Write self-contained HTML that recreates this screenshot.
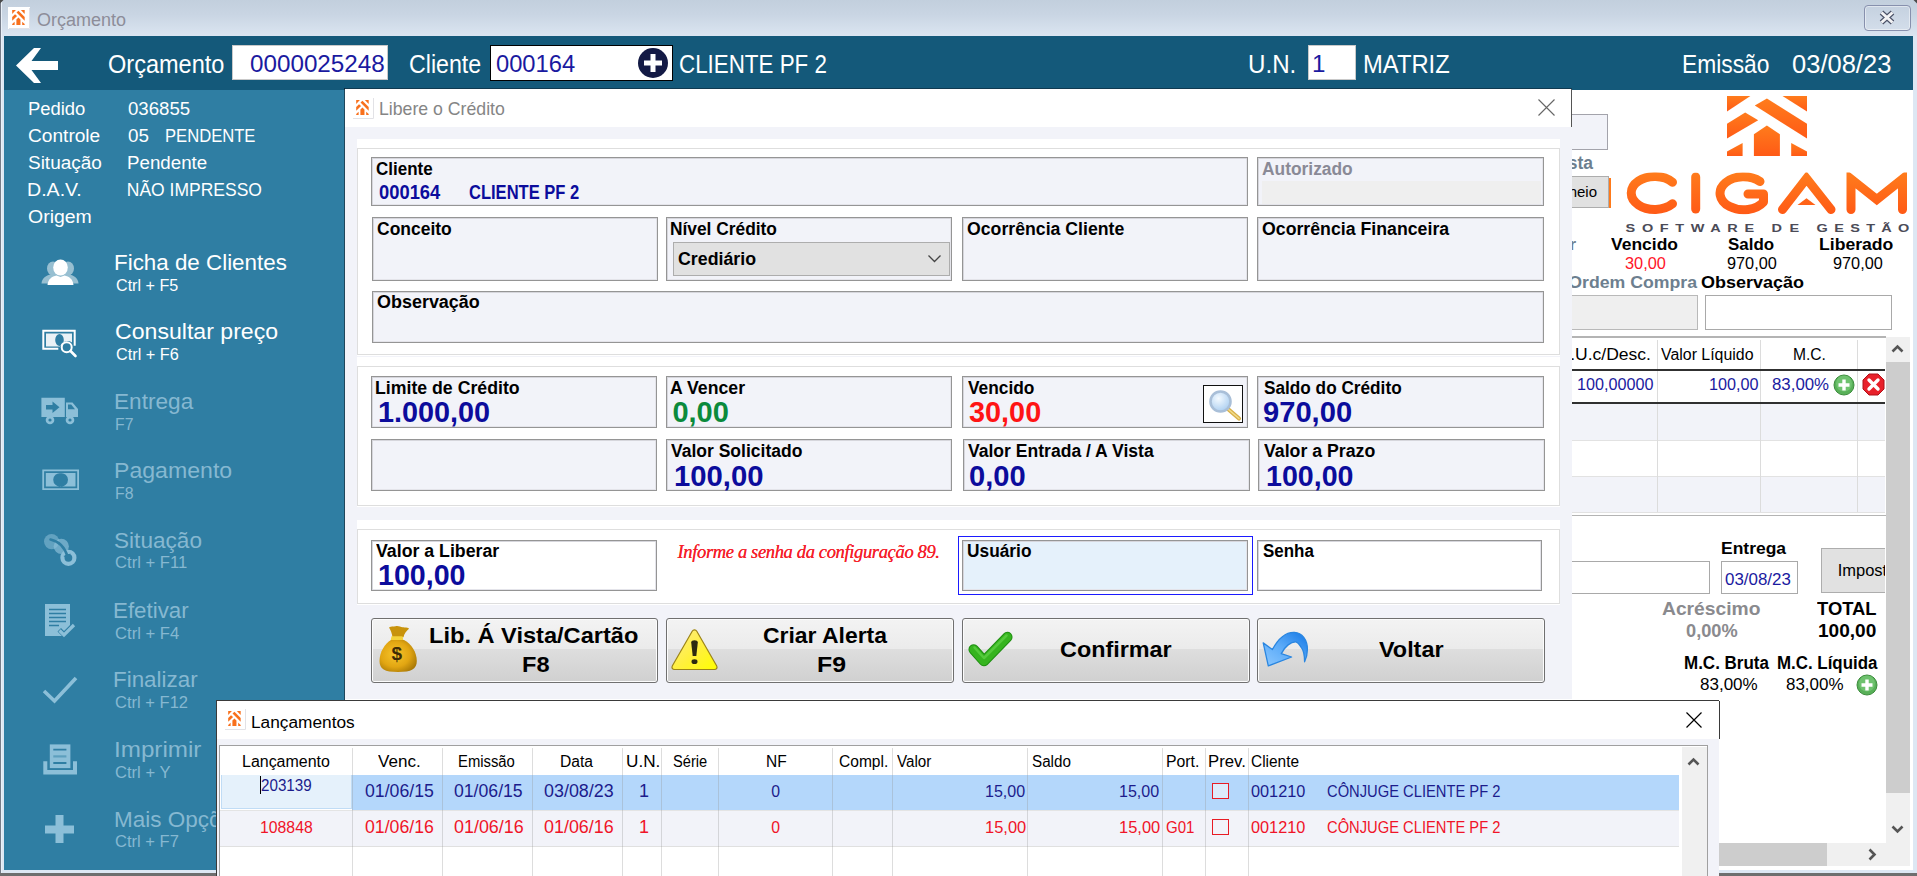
<!DOCTYPE html>
<html><head><meta charset="utf-8">
<style>
*{box-sizing:border-box;margin:0;padding:0}
html,body{width:1917px;height:876px;overflow:hidden;background:#fff;font-family:"Liberation Sans",sans-serif;}
.a{position:absolute;white-space:nowrap}
#win{position:absolute;left:0;top:0;width:1917px;height:876px;background:#dde7f3;overflow:hidden}
#tb{left:0;top:0;width:1917px;height:36px;background:linear-gradient(#c2cfdd 0%,#c9d5e3 40%,#dbe5f1 100%)}
#hdr{left:4px;top:36px;width:1909px;height:54px;background:#14597a}
#side{left:4px;top:90px;width:341px;height:780px;background:#2f7ea3}
#main{left:345px;top:90px;width:1568px;height:780px;background:#fff}
.ht{color:#fff;font-size:25px;line-height:30px;top:49px}
.hin{background:#fff}
.hv{color:#1a1aa0;font-size:24.200px;line-height:30px;top:49px}
.inf{color:#fff;font-size:17.5px;line-height:22px}
.mi{left:115px;color:#fff}
.mi b{display:block;font-weight:normal;font-size:22px;line-height:26px}
.mi i{display:block;font-style:normal;font-size:13.5px;line-height:16px}
.mt{color:#fff;font-size:22.500px;line-height:26px}
.ms{color:#fff;font-size:15.800px;line-height:18px}
.mt.dis,.ms.dis{color:#86b8d1}

#dlg{left:345px;top:89px;width:1227px;height:611px;background:#f2f3f9;border-bottom:1px solid #fff}
#dlgt{left:0;top:0;width:1227px;height:38px;background:#fff;border-right:1px solid #555}
.gb{background:#fff;left:12px;width:1203px}
.gb:after{content:"";position:absolute;left:0;right:0;top:9px;bottom:1px;border:1px solid #dedede}
.f{position:absolute;background:#f2f3f9;border:1px solid #959595;box-shadow:inset 1px 1px 0 #d6d6dc, inset -1px -1px 0 #e4e4ea}
.f.w{background:#fff}
.f.u{background:#e5f1fb}
.l{position:absolute;font-weight:bold;font-size:17.550px;line-height:20px;color:#000;white-space:nowrap}
.v{position:absolute;font-weight:bold;font-size:29px;line-height:30px;color:#0c0c9c;white-space:nowrap}
.btn{position:absolute;top:618px;height:65px;border:1px solid #707070;border-radius:3px;background:linear-gradient(#f3f3f3 0%,#ebebeb 47%,#dedede 48%,#d0d0d0 100%);box-shadow:inset 0 0 0 1px #fcfcfc;font-weight:bold;font-size:23px;line-height:29px;text-align:center;color:#000}

.rb{font-weight:bold;font-size:17px;line-height:20px;color:#000}
.rv{font-size:16px;line-height:18px;color:#000}
.th{font-size:16px;line-height:20px;color:#000}
.td{font-size:16px;line-height:20px;color:#1a1aa0}

#lw{left:216px;top:700px;width:1503px;height:176px;background:#f2f3f9;border:1px solid #3a3a3a;border-bottom:0;border-right:0}
.gh{position:absolute;top:751.500px;font-size:16px;line-height:20px;color:#000;white-space:nowrap}
.gc{position:absolute;font-size:18px;line-height:20px;white-space:nowrap}
.gs{position:absolute;font-size:15.800px;line-height:20px;white-space:nowrap}
.r1{color:#1c1c8c}.r2{color:#f01428}
.vl{position:absolute;top:748px;width:1px;height:128px;background:rgba(150,150,150,.32)}
.cv{font-weight:bold;font-size:18.800px;line-height:20px;color:#0c0c9c}
.bt{font-weight:bold;font-size:22.500px;line-height:26px;color:#000}
</style></head><body>
<div id="win">
<div id="tb" class="a"></div>
<div id="hdr" class="a"></div>
<div id="side" class="a"></div>
<div id="main" class="a"></div>
<svg class="a" style="left:8px;top:7px" width="22" height="22" viewBox="0 0 22 22"><rect width="22" height="22" fill="#fff"/><path d="M21.500 1v20.500H1" fill="none" stroke="#e2e2e6"/><g fill="#f8701c" transform="translate(4.200 3) scale(.156 .25)"><path d="M0 0h23.400L0 15.600z"/><path d="M80 0H55.500L80 15.600z"/><path d="M39.900 2.600L80 27.800v14.700L27.800 9.500z"/><path d="M18.200 16.500l13 7.800L0 42.500V27.800z"/><path d="M39.900 29.500l13 8.700V60h-26V38.200z"/><path d="M0 55.500l15.600-8.600V60H0z"/><path d="M80 55.500l-15.800-8.600V60H80z"/></g></svg>
<div class="a" style="left:37px;top:9px;font-size:18px;line-height:22px;color:#8d8d99">Orçamento</div>
<div class="a" style="left:1864px;top:5px;width:47px;height:26px;border:1px solid #8790ad;border-radius:4px;background:linear-gradient(#c5d1e0,#d3ddea);box-shadow:inset 0 0 0 1px rgba(255,255,255,.45)"></div>
<svg class="a" style="left:1877px;top:9px" width="20" height="17" viewBox="0 0 20 17"><path d="M4.500 3.500l11 10M15.500 3.500l-11 10" stroke="#4a5066" stroke-width="5.200" stroke-linecap="butt"/><path d="M4.500 3.500l11 10M15.500 3.500l-11 10" stroke="#f2f2f4" stroke-width="3" stroke-linecap="butt"/></svg>
<div class="a" style="left:0;top:0;width:1px;height:876px;background:#767c88"></div><div class="a" style="left:1px;top:2px;width:1px;height:871px;background:#e9f0f8"></div><svg class="a" style="left:0;top:0" width="4" height="4"><path d="M0 0h3.500L0 3.500z" fill="#4a4a4a"/></svg><svg class="a" style="left:1913px;top:0" width="4" height="4"><path d="M4 0H.5L4 3.500z" fill="#4a4a4a"/></svg>
<div class="a" style="left:0;top:873px;width:1917px;height:3px;background:#6e6e6e"></div>


<svg class="a" style="left:15px;top:47px" width="44" height="37" viewBox="0 0 44 37"><path d="M1 18.500L19 1h7l-9.500 13H43v9H16.500L26 36h-7z" fill="#fff"/></svg>
<div class="a ht" id="h1" style="left:108.42px;transform-origin:0 0;transform:scaleX(0.9411)">Orçamento</div>
<div class="a hin" style="left:232px;top:45px;width:156px;height:35px;border:1px solid #c9c9c9"></div>
<div class="a hv" id="h2" style="left:249.8px;transform-origin:0 0;transform:scaleX(1.0015)">0000025248</div>
<div class="a ht" id="h3" style="left:408.59px;transform-origin:0 0;transform:scaleX(0.9266)">Cliente</div>
<div class="a hin" style="left:490px;top:45px;width:183px;height:36px;border:1.500px solid #000"></div>
<div class="a hv" id="h4" style="left:496.22px;transform-origin:0 0;transform:scaleX(0.98)">000164</div>
<svg class="a" style="left:637px;top:47px" width="32" height="32" viewBox="0 0 32 32"><circle cx="16" cy="16" r="15" fill="#131a45"/><path d="M13.500 7h5v6.500H25v5h-6.500V25h-5v-6.500H7v-5h6.500z" fill="#fff"/></svg>
<div class="a ht" id="h5" style="left:678.6px;transform-origin:0 0;transform:scaleX(0.8945)">CLIENTE PF 2</div>
<div class="a ht" id="h6" style="left:1248.22px;transform-origin:0 0;transform:scaleX(0.9661)">U.N.</div>
<div class="a hin" style="left:1308px;top:45px;width:48px;height:35px;border:1px solid #c9c9c9"></div>
<div class="a hv" id="h7" style="left:1312px;transform-origin:0 0;transform:scaleX(1)">1</div>
<div class="a ht" id="h8" style="left:1362.7px;transform-origin:0 0;transform:scaleX(0.9509)">MATRIZ</div>
<div class="a ht" id="h9" style="left:1681.95px;transform-origin:0 0;transform:scaleX(0.9121)">Emissão</div>
<div class="a ht" id="h10" style="left:1792.39px;transform-origin:0 0;transform:scaleX(1.0208)">03/08/23</div>

<div class="a inf" id="s1" style="left:27.55px;transform-origin:0 0;transform:scaleX(1.0528);top:98px">Pedido</div><div class="a inf" id="s2" style="left:127.8px;transform-origin:0 0;transform:scaleX(1.0655);top:98px">036855</div>
<div class="a inf" id="s3" style="left:27.51px;transform-origin:0 0;transform:scaleX(1.0923);top:125px">Controle</div><div class="a inf" id="s4" style="left:127.8px;transform-origin:0 0;transform:scaleX(1.0738);top:125px">05</div>
<div class="a inf" id="s5" style="left:27.51px;transform-origin:0 0;transform:scaleX(1.0836);top:152px">Situação</div><div class="a inf" id="s6" style="left:126.73px;transform-origin:0 0;transform:scaleX(1.0704);top:152px">Pendente</div>
<div class="a inf" id="s7" style="left:27.49px;transform-origin:0 0;transform:scaleX(1.1192);top:179px">D.A.V.</div><div class="a inf" id="s8" style="left:126.8px;transform-origin:0 0;transform:scaleX(1.0);top:179px">NÃO IMPRESSO</div>
<div class="a inf" id="s9" style="left:27.59px;transform-origin:0 0;transform:scaleX(1.1127);top:206px">Origem</div>
<div class="a inf" id="s11" style="left:164.85px;transform-origin:0 0;transform:scaleX(0.949);top:125px">PENDENTE</div>
<div class="a mt" id="m1" style="left:114.0px;transform-origin:0 0;transform:scaleX(0.9942);top:249.6px">Ficha de Clientes</div><div class="a ms" id="n1" style="left:116.47px;transform-origin:0 0;transform:scaleX(1.0205);top:276.6px">Ctrl + F5</div>
<div class="a mt" id="m2" style="left:114.97px;transform-origin:0 0;transform:scaleX(1.0268);top:318.7px">Consultar preço</div><div class="a ms" id="n2" style="left:116.47px;transform-origin:0 0;transform:scaleX(1.0271);top:345.7px">Ctrl + F6</div>
<div class="a mt dis" id="m3" style="left:113.99px;transform-origin:0 0;transform:scaleX(1.0052);top:389.2px">Entrega</div><div class="a ms dis" id="n3" style="left:115px;transform-origin:0 0;transform:scaleX(1);top:416.1px">F7</div>
<div class="a mt dis" id="m4" style="left:113.95px;transform-origin:0 0;transform:scaleX(1.0268);top:457.9px">Pagamento</div><div class="a ms dis" id="n4" style="left:115px;transform-origin:0 0;transform:scaleX(1);top:484.8px">F8</div>
<div class="a mt dis" id="m5" style="left:113.99px;transform-origin:0 0;transform:scaleX(1.0047);top:527.6px">Situação</div><div class="a ms dis" id="n5" style="left:115.48px;transform-origin:0 0;transform:scaleX(1.0538);top:554.2px">Ctrl + F11</div>
<div class="a mt dis" id="m6" style="left:113.02px;transform-origin:0 0;transform:scaleX(0.9919);top:597.9px">Efetivar</div><div class="a ms dis" id="n6" style="left:115.47px;transform-origin:0 0;transform:scaleX(1.0534);top:624.8px">Ctrl + F4</div>
<div class="a mt dis" id="m7" style="left:113.01px;transform-origin:0 0;transform:scaleX(0.9952);top:666.8px">Finalizar</div><div class="a ms dis" id="n7" style="left:115.48px;transform-origin:0 0;transform:scaleX(1.0465);top:693.8px">Ctrl + F12</div>
<div class="a mt dis" id="m8" style="left:113.85px;transform-origin:0 0;transform:scaleX(1.076);top:737.1px">Imprimir</div><div class="a ms dis" id="n8" style="left:115.48px;transform-origin:0 0;transform:scaleX(1.05);top:764.4px">Ctrl + Y</div>
<div class="a mt dis" id="m9" style="left:114px;transform-origin:0 0;transform:scaleX(1.0);top:806.5px">Mais Opções</div><div class="a ms dis" id="n9" style="left:115.07px;transform-origin:0 0;transform:scaleX(1.0469);top:833.4px">Ctrl + F7</div>

<svg class="a" style="left:40px;top:258px" width="40" height="28" viewBox="40 258 40 28"><g fill="#fff"><g opacity=".5"><ellipse cx="53" cy="268.500" rx="6" ry="7"/><ellipse cx="68" cy="268.500" rx="6" ry="7"/><path d="M41.500 283.600c.5-5.500 4-8 11-9.500h15c7 1.500 10.500 4 11 9.500z"/></g><ellipse cx="60.500" cy="267.500" rx="7.300" ry="8"/><path d="M47.500 285c.5-6 4.500-8.500 9-9.500l4 1.500 4-1.500c4.500 1 8.500 3.500 9 9.500z"/></g></svg>
<svg class="a" style="left:41px;top:328px" width="38" height="30" viewBox="41 328 38 30"><path d="M42.300 329.800h33.400v16h-2v-14H44.300v16h14v2h-16z" fill="#fff"/><path d="M46 333.500h26v9a8 8 0 0 0-12 4H46z M59.500 334a4.300 6 0 1 0 0 12 a4.300 6 0 1 0 0-12z" fill="#fff" fill-rule="evenodd" opacity=".9"/><circle cx="66.700" cy="347.300" r="5" fill="none" stroke="#fff" stroke-width="2"/><path d="M70.500 351l5 5" stroke="#fff" stroke-width="2.600" stroke-linecap="round"/></svg>
<svg class="a" style="left:40px;top:396px" width="40" height="30" viewBox="40 396 40 30"><g fill="#8cbfd8"><path d="M41.400 397.700h23.400v19.300h-23.400z M52.500 401.500v3.500h-6.500v4.500h6.500v3.500l7-5.700z" fill-rule="evenodd"/><path d="M66 402.500h6.500l5.500 6.500v8H66z M68 404.500v4.800h7l-3.800-4.800z" fill-rule="evenodd"/><circle cx="50" cy="420" r="4.300"/><circle cx="70" cy="420" r="4.300"/></g><circle cx="50" cy="420" r="1.600" fill="#2f7ea3"/><circle cx="70" cy="420" r="1.600" fill="#2f7ea3"/></svg>
<svg class="a" style="left:41px;top:468px" width="40" height="24" viewBox="41 468 40 24"><path d="M42.300 469.500h36.700v20.500H42.300z M44.100 471.300v16.900h33.100v-16.900z" fill="#8cbfd8" fill-rule="evenodd"/><path d="M45.800 473h29.700v13.500H45.800z M60.600 473.300a6.300 6.600 0 1 0 0 13a6.300 6.600 0 1 0 0-13z" fill="#8cbfd8" fill-rule="evenodd"/></svg>
<svg class="a" style="left:42px;top:532px" width="38" height="36" viewBox="42 532 38 36"><circle cx="51.600" cy="541.600" r="7.600" fill="#8cbfd8" opacity=".55"/><circle cx="61.300" cy="546.300" r="7.600" fill="#8cbfd8" opacity=".68"/><circle cx="68.400" cy="557.800" r="6" fill="none" stroke="#8cbfd8" stroke-width="4.200"/><path d="M50.500 539.500c7 1.500 14 7 17 17" fill="none" stroke="#2f7ea3" stroke-width="2.600" stroke-linecap="round"/><path d="M63.500 556l5.500 4.500 1.500-7z" fill="#2f7ea3"/></svg>
<svg class="a" style="left:44px;top:603px" width="33" height="36" viewBox="0 0 33 36"><path d="M1 1h25v21l-6 6 -3-3-3.500 3.500 4.500 4.500H1z" fill="#8cbfd8"/><g stroke="#2f7ea3" stroke-width="1.500"><path d="M5 6.500h17M5 10.500h17M5 14.500h17M5 18.500h17M5 22.500h10"/></g><path d="M15.500 27.500l4.500 4.500 10-10" fill="none" stroke="#8cbfd8" stroke-width="3.200"/></svg>
<svg class="a" style="left:42px;top:675px" width="36" height="29" viewBox="0 0 36 29"><path d="M2 16l10.500 10L34 3" fill="none" stroke="#8cbfd8" stroke-width="3.600"/></svg>
<svg class="a" style="left:42px;top:743px" width="37" height="33" viewBox="42 743 37 33"><path d="M49.800 744.400h20.600v23.700H49.800z" fill="#8cbfd8"/><g stroke="#2f7ea3" stroke-width="1.900"><path d="M53.300 749.600h13.100M53.300 763h13.100"/></g><path d="M53.300 756.400h13.100" stroke="#5d9fbe" stroke-width="2.200"/><path d="M43.300 761.300h4v8.600h25.700v-8.600h4v13.100H43.300z" fill="#8cbfd8"/></svg>
<svg class="a" style="left:44px;top:814px" width="31" height="30" viewBox="0 0 31 30"><path d="M11.500 1h8v10.500H30v8H19.500V29h-8v-9.500H1v-8h10.500z" fill="#8cbfd8"/></svg>


<div class="a" style="left:1540px;top:114px;width:68px;height:36px;background:#f2f3f9;border:1px solid #a3a3ab"></div>
<div class="a rb" style="left:1500px;width:93px;text-align:right;top:152.500px;color:#6d7f8f;font-size:17.500px">Vista</div>
<div class="a" style="left:1608px;top:178px;width:3px;height:30px;background:#ff7a1a"></div>
<div class="a" style="left:1540px;top:176px;width:69px;height:32px;background:#e1e1e1;border:1px solid #adadad"></div>
<div class="a" style="left:1500px;width:97px;text-align:right;top:183px;font-size:15px;line-height:18px;color:#000">Dinheio</div>
<svg class="a" style="left:1727px;top:96px" width="80" height="60" viewBox="0 0 80 60"><defs><linearGradient id="og" x1="0" y1="0" x2="0" y2="1"><stop offset="0" stop-color="#ff7c1c"/><stop offset="1" stop-color="#ff5a16"/></linearGradient></defs><g fill="url(#og)"><path d="M0 0h23.400L0 15.600z"/><path d="M80 0H55.500L80 15.600z"/><path d="M39.900 2.600L80 27.800v14.700L27.800 9.500z"/><path d="M18.200 16.500l13 7.800L0 42.500V27.800z"/><path d="M39.900 29.500l13 8.700V60h-26V38.200z"/><path d="M0 55.500l15.600-8.600V60H0z"/><path d="M80 55.500l-15.800-8.600V60H80z"/></g></svg>
<svg class="a" style="left:1620px;top:168px" width="294" height="50" viewBox="-5 -4 294 50"><defs><linearGradient id="og2" gradientUnits="userSpaceOnUse" x1="0" y1="0" x2="0" y2="42"><stop offset="0" stop-color="#ff7c1c"/><stop offset="1" stop-color="#ff5a16"/></linearGradient></defs><clipPath id="lc"><rect x="-5" y="0.400" width="294" height="42"/></clipPath><g clip-path="url(#lc)" fill="none" stroke="url(#og2)" stroke-width="9" stroke-linecap="round" stroke-linejoin="round"><path d="M47.500 10.200A23.500 16.500 0 1 0 47.500 31.800"/><path d="M70.700 5v32"/><path d="M135 9.500A23.500 16.500 0 1 0 138.500 30V22H123"/><path d="M157.500 37.500L181.500 6.500 206 37.500" stroke-linejoin="miter"/><path d="M226 37.500V7L251.800 27.500 277.500 7V37.500" stroke-linejoin="miter"/></g><path d="M172.500 33l9-6.800 9 6.800z" fill="url(#og2)"/></svg>
<svg class="a" style="left:1620px;top:221px" width="294" height="14" viewBox="0 0 294 14"><g font-family="Liberation Sans, sans-serif" font-weight="bold" font-size="11.600" fill="#4b4b57" transform="scale(1.25,1)"><text x="4.480" y="11.300" textLength="102.800" lengthAdjust="spacing">SOFTWARE</text><text x="121.300" y="11.300" textLength="22" lengthAdjust="spacing">DE</text><text x="157.300" y="11.300" textLength="74.200" lengthAdjust="spacing">GESTÃO</text></g></svg>
<div class="a rb" style="left:1560px;top:235px;width:16px;text-align:right;color:#6d7f8f">r</div>
<div class="a rb" id="R1" style="left:1610.51px;transform-origin:0 0;transform:scaleX(1.0274);top:235px">Vencido</div>
<div class="a rb" id="R2" style="left:1727.5px;transform-origin:0 0;transform:scaleX(0.9956);top:235px">Saldo</div>
<div class="a rb" id="R3" style="left:1819.37px;transform-origin:0 0;transform:scaleX(1.0362);top:235px">Liberado</div>
<div class="a rv" id="R4" style="left:1625.07px;transform-origin:0 0;transform:scaleX(1.0212);top:254.5px;color:#ff1428">30,00</div>
<div class="a rv" id="R5" style="left:1726.79px;transform-origin:0 0;transform:scaleX(1.0164);top:254.5px">970,00</div>
<div class="a rv" id="R6" style="left:1833.3px;transform-origin:0 0;transform:scaleX(1.0164);top:254.5px">970,00</div>
<div class="a rb" id="R24" style="left:1500px;top:273px;width:197px;text-align:right;color:#6d7f8f;transform-origin:100% 0;transform:scaleX(1.04)">Ordem Compra</div>
<div class="a rb" id="R7" style="left:1701.39px;transform-origin:0 0;transform:scaleX(1.0577);top:273px">Observação</div>
<div class="a" style="left:1540px;top:295px;width:158px;height:35px;background:#efefef;border:1px solid #b9b9b9"></div>
<div class="a" style="left:1705px;top:295px;width:187px;height:35px;background:#fff;border:1px solid #a9a9a9"></div>
<div class="a" style="left:1540px;top:336px;width:346px;height:180px;border-top:2px solid #b4b4b4;border-bottom:1px solid #b4b4b4;background:#fff"></div>
<div class="a" style="left:1540px;top:404px;width:345px;height:36px;background:#f2f3f9"></div>
<div class="a" style="left:1540px;top:477px;width:345px;height:35px;background:#f2f3f9"></div>
<div class="a" style="left:1540px;top:440px;width:345px;height:1px;background:#e2e2e2"></div>
<div class="a" style="left:1540px;top:476px;width:345px;height:1px;background:#e2e2e2"></div>
<div class="a" style="left:1540px;top:512px;width:345px;height:1px;background:#e2e2e2"></div>
<div class="a" style="left:1657px;top:340px;width:1px;height:172px;background:#dcdcdc"></div>
<div class="a" style="left:1760px;top:340px;width:1px;height:172px;background:#dcdcdc"></div>
<div class="a" style="left:1857px;top:340px;width:1px;height:172px;background:#dcdcdc"></div>
<div class="a" style="left:1540px;top:369px;width:345px;height:2px;background:#303030"></div>
<div class="a" style="left:1540px;top:402px;width:345px;height:2px;background:#303030"></div>
<div class="a th" style="left:1450px;top:344.500px;width:201px;text-align:right;transform-origin:100% 0;transform:scaleX(1.095)">P.U.c/Desc.</div>
<div class="a th" id="R8" style="left:1661.2px;transform-origin:0 0;transform:scaleX(0.9936);top:344.500px">Valor Líquido</div>
<div class="a th" id="R9" style="left:1792.62px;transform-origin:0 0;transform:scaleX(0.9752);top:344.500px">M.C.</div>
<div class="a td" id="R10" style="left:1577.39px;transform-origin:0 0;transform:scaleX(1.0109);top:374.5px">100,00000</div>
<div class="a td" id="R11" style="left:1709.19px;transform-origin:0 0;transform:scaleX(1.0125);top:374.5px">100,00</div>
<div class="a td" id="R12" style="left:1771.77px;transform-origin:0 0;transform:scaleX(1.052);top:374.5px">83,00%</div>
<svg class="a" style="left:1833px;top:374px" width="22" height="22" viewBox="0 0 22 22"><circle cx="11" cy="11" r="10" fill="#58b058" stroke="#3c8c3c" stroke-width="1"/><circle cx="11" cy="9.500" r="8" fill="#7fcf7f" opacity=".6"/><path d="M9.300 5.500h3.400v3.800h3.800v3.400h-3.800v3.800H9.300v-3.800H5.500V9.300h3.800z" fill="#fff"/></svg>
<svg class="a" style="left:1862px;top:373px" width="23" height="23" viewBox="0 0 23 23"><path d="M7 1h9l6 6v9l-6 6H7l-6-6V7z" fill="#e8202a" stroke="#b01018" stroke-width="1"/><path d="M7 7l9 9M16 7l-9 9" stroke="#fff" stroke-width="3.400" stroke-linecap="round"/></svg>
<div class="a" style="left:1886px;top:337px;width:24px;height:507px;background:#f0f0f0"></div>
<div class="a" style="left:1886px;top:362px;width:24px;height:431px;background:#cdcdcd"></div>
<svg class="a" style="left:1891px;top:344px" width="13" height="9" viewBox="0 0 13 9"><path d="M1.500 7.500l5-5 5 5" fill="none" stroke="#555" stroke-width="2.600"/></svg>
<svg class="a" style="left:1891px;top:825px" width="13" height="9" viewBox="0 0 13 9"><path d="M1.500 1.500l5 5 5-5" fill="none" stroke="#555" stroke-width="2.600"/></svg>
<div class="a" style="left:1540px;top:843px;width:346px;height:23px;background:#f0f0f0"></div>
<div class="a" style="left:1540px;top:843px;width:287px;height:23px;background:#cdcdcd"></div>
<svg class="a" style="left:1868px;top:848px" width="9" height="13" viewBox="0 0 9 13"><path d="M1.500 1.500l5 5-5 5" fill="none" stroke="#555" stroke-width="2.600"/></svg>
<div class="a" style="left:1886px;top:843px;width:24px;height:23px;background:#f0f0f0"></div>
<div class="a" style="left:1540px;top:561px;width:170px;height:33px;background:#fff;border:1px solid #a9a9a9"></div>
<div class="a rb" id="R13" style="left:1720.78px;transform-origin:0 0;transform:scaleX(1.0284);top:539px">Entrega</div>
<div class="a" style="left:1721px;top:561px;width:77px;height:33px;background:#fff;border:1px solid #a9a9a9"></div>
<div class="a rv" id="R14" style="left:1724.88px;transform-origin:0 0;transform:scaleX(1.0257);top:570px;color:#1a1aa0;font-size:16.500px">03/08/23</div>
<div class="a" style="left:1821px;top:548px;width:64px;height:45px;background:#e1e1e1;border:1px solid #adadad;border-right:0"></div>
<div class="a" style="left:1830px;top:556px;width:55px;height:30px;overflow:hidden"><div class="a rv" id="R15" style="left:7.700px;transform-origin:0 0;transform:scaleX(1);top:4.500px;font-size:16.500px">Impostos</div></div>
<div class="a rb" id="R16" style="left:1661.79px;transform-origin:0 0;transform:scaleX(1.0126);top:598.5px;color:#8a8a8e;font-size:19px">Acréscimo</div>
<div class="a rb" id="R17" style="left:1685.62px;transform-origin:0 0;transform:scaleX(0.9586);top:621px;color:#8a8a8e;font-size:19px">0,00%</div>
<div class="a rb" id="R18" style="left:1817.19px;transform-origin:0 0;transform:scaleX(0.9677);top:598.5px;font-size:19px">TOTAL</div>
<div class="a rb" id="R19" style="left:1817.6px;transform-origin:0 0;transform:scaleX(1.0036);top:621px;font-size:19px">100,00</div>
<div class="a rb" id="R20" style="left:1684.4px;transform-origin:0 0;transform:scaleX(0.9705);top:653px;font-size:17.500px">M.C. Bruta</div>
<div class="a rb" id="R21" style="left:1777.11px;transform-origin:0 0;transform:scaleX(0.9655);top:653px;font-size:17.500px">M.C. Líquida</div>
<div class="a rv" id="R22" style="left:1699.77px;transform-origin:0 0;transform:scaleX(1.0632);top:676px">83,00%</div>
<div class="a rv" id="R23" style="left:1786.47px;transform-origin:0 0;transform:scaleX(1.0593);top:676px">83,00%</div>
<svg class="a" style="left:1856px;top:674px" width="22" height="22" viewBox="0 0 22 22"><circle cx="11" cy="11" r="10" fill="#58b058" stroke="#3c8c3c" stroke-width="1"/><circle cx="11" cy="9.500" r="8" fill="#7fcf7f" opacity=".6"/><path d="M9.300 5.500h3.400v3.800h3.800v3.400h-3.800v3.800H9.300v-3.800H5.500V9.300h3.800z" fill="#fff"/></svg>

<div class="a" style="left:344px;top:88px;width:1px;height:612px;background:rgba(22,34,44,.6)"></div>
<div class="a" style="left:344px;top:88px;width:1228px;height:1px;background:rgba(10,20,30,.45)"></div>
<div class="a" style="left:345px;top:127px;width:1px;height:572px;background:#fff"></div>
<div id="dlg" class="a">
<div id="dlgt" class="a"></div>
<svg class="a" style="left:7px;top:8px" width="22" height="22" viewBox="0 0 22 22"><rect width="22" height="22" fill="#fff"/><path d="M21.500 1v20.500H1" fill="none" stroke="#e2e2e6"/><g fill="#f8701c" transform="translate(4.200 3) scale(.156 .25)"><path d="M0 0h23.400L0 15.600z"/><path d="M80 0H55.500L80 15.600z"/><path d="M39.900 2.600L80 27.800v14.700L27.800 9.500z"/><path d="M18.200 16.500l13 7.800L0 42.500V27.800z"/><path d="M39.900 29.500l13 8.700V60h-26V38.200z"/><path d="M0 55.500l15.600-8.600V60H0z"/><path d="M80 55.500l-15.800-8.600V60H80z"/></g></svg><div class="a" style="left:34px;top:9px;font-size:17.700px;line-height:22px;color:#858585">Libere o Crédito</div>
<svg class="a" style="left:1192px;top:9px" width="19" height="19" viewBox="0 0 19 19"><path d="M1.500 1.500l16 16M17.500 1.500l-16 16" stroke="#666" stroke-width="1.100" fill="none"/></svg>
</div>
<div class="a gb" style="left:357px;top:139px;height:217px"></div>
<div class="a gb" style="left:357px;top:357px;height:150px"></div>
<div class="a gb" style="left:357px;top:520px;height:85px"></div>
<div class="a" id="flds" style="left:0;top:0">
<div class="f " style="left:371px;top:157px;width:877px;height:49px"><span class="l" id="L1" style="left:3.51px;transform-origin:0 0;transform:scale(0.9692,1.045);top:-0.5px">Cliente</span><span class="a cv" id="C1" style="left:6.6px;transform-origin:0 0;transform:scale(0.9778,1.06);top:24.300px">000164</span><span class="a cv" id="C2" style="left:96.78px;transform-origin:0 0;transform:scale(0.88,1.06);top:24.300px">CLIENTE PF 2</span></div>
<div class="f " style="left:1257px;top:157px;width:287px;height:49px"><span class="l" id="L2" style="left:3.7px;transform-origin:0 0;transform:scale(0.9912,1.045);top:-0.5px;color:#8a8a96">Autorizado</span><span class="a" style="left:4px;top:23px;width:279px;height:23px;background:#efefef"></span></div>
<div class="f " style="left:372px;top:217px;width:286px;height:64px"><span class="l" id="L3" style="left:3.5px;transform-origin:0 0;transform:scale(0.9974,1.045);top:-0.5px">Conceito</span></div>
<div class="f " style="left:666px;top:217px;width:286px;height:64px"><span class="l" id="L4" style="left:2.5px;transform-origin:0 0;transform:scale(0.989,1.045);top:-0.5px">Nível Crédito</span><span class="a" style="left:6px;top:24px;width:277px;height:34px;background:#e1e1e1;border:1px solid #adadad"></span><span class="a cv" id="C3" style="left:11.0px;transform-origin:0 0;transform:scale(1.0157,1.08);top:30px;color:#000;font-size:17.500px">Crediário</span><svg class="a" style="left:260px;top:36px" width="15" height="9" viewBox="0 0 15 9"><path d="M1.500 1.500l6 6 6-6" stroke="#444" stroke-width="1.300" fill="none"/></svg></div>
<div class="f " style="left:962px;top:217px;width:286px;height:64px"><span class="l" id="L5" style="left:4.09px;transform-origin:0 0;transform:scale(1.0091,1.045);top:-0.5px">Ocorrência Cliente</span></div>
<div class="f " style="left:1257px;top:217px;width:287px;height:64px"><span class="l" id="L6" style="left:3.69px;transform-origin:0 0;transform:scale(1.0108,1.045);top:-0.5px">Ocorrência Financeira</span></div>
<div class="f " style="left:372px;top:291px;width:1172px;height:52px"><span class="l" id="L7" style="left:4.49px;transform-origin:0 0;transform:scale(1.024,1.045);top:-1px">Observação</span></div>
<div class="f " style="left:371px;top:376px;width:286px;height:52px"><span class="l" id="L8" style="left:3.09px;transform-origin:0 0;transform:scale(1.0099,1.045);top:-0.5px">Limite de Crédito</span><span class="v" id="V1" style="left:6.01px;transform-origin:0 0;transform:scale(0.9928,1.02);top:18.500px">1.000,00</span></div>
<div class="f " style="left:666px;top:376px;width:286px;height:52px"><span class="l" id="L9" style="left:3.49px;transform-origin:0 0;transform:scale(1.0083,1.045);top:-0.5px">A Vencer</span><span class="v" id="V2" style="left:5.4px;transform-origin:0 0;transform:scale(1.0,1.02);top:18.500px;color:#0b8a3c">0,00</span></div>
<div class="f " style="left:962px;top:376px;width:286px;height:52px"><span class="l" id="L10" style="left:4.5px;transform-origin:0 0;transform:scale(0.9886,1.045);top:-0.5px">Vencido</span><span class="v" id="V3" style="left:6.0px;transform-origin:0 0;transform:scale(0.9944,1.02);top:18.500px;color:#ff1414">30,00</span><span class="a" style="left:240px;top:8px;width:40px;height:38px;border:1.500px solid #111;background:#fff"></span><svg class="a" style="left:243px;top:11px" width="36" height="34" viewBox="0 0 36 34"><defs><radialGradient id="lg" cx=".4" cy=".35" r=".7"><stop offset="0" stop-color="#f4faff"/><stop offset="1" stop-color="#a9cdf0"/></radialGradient></defs><path d="M22 21l11 9.500" stroke="#d8b04a" stroke-width="4.200" stroke-linecap="round"/><path d="M22 21l11 9.500" stroke="#f3dc8a" stroke-width="1.600" stroke-linecap="round"/><circle cx="14.500" cy="13.500" r="10" fill="url(#lg)" stroke="#a9bfd8" stroke-width="2.600"/></svg></div>
<div class="f " style="left:1257px;top:376px;width:287px;height:52px"><span class="l" id="L11" style="left:5.51px;transform-origin:0 0;transform:scale(0.9814,1.045);top:-0.5px">Saldo do Crédito</span><span class="v" id="V4" style="left:4.8px;transform-origin:0 0;transform:scale(1.0046,1.02);top:18.500px">970,00</span></div>
<div class="f " style="left:371px;top:439px;width:286px;height:52px"></div>
<div class="f " style="left:666px;top:439px;width:286px;height:52px"><span class="l" id="L12" style="left:3.5px;transform-origin:0 0;transform:scale(0.9986,1.045);top:0px">Valor Solicitado</span><span class="v" id="V5" style="left:6.77px;transform-origin:0 0;transform:scale(1.0095,1.02);top:20px">100,00</span></div>
<div class="f " style="left:963px;top:439px;width:287px;height:52px"><span class="l" id="L13" style="left:3.5px;transform-origin:0 0;transform:scale(1.0011,1.045);top:0px">Valor Entrada / A Vista</span><span class="v" id="V6" style="left:5.4px;transform-origin:0 0;transform:scale(1.0036,1.02);top:20px">0,00</span></div>
<div class="f " style="left:1258px;top:439px;width:287px;height:52px"><span class="l" id="L14" style="left:4.5px;transform-origin:0 0;transform:scale(1.0108,1.045);top:0px">Valor a Prazo</span><span class="v" id="V7" style="left:6.81px;transform-origin:0 0;transform:scale(0.9864,1.02);top:20px">100,00</span></div>
<div class="f w" style="left:371px;top:540px;width:286px;height:51px"><span class="l" id="L15" style="left:4.1px;transform-origin:0 0;transform:scale(1.0114,1.045);top:-0.8px">Valor a Liberar</span><span class="v" id="V8" style="left:6.0px;transform-origin:0 0;transform:scale(0.9864,1.02);top:17.700px">100,00</span></div>
<div class="a" id="redt" style="left:677.500px;top:541px;font-family:'Liberation Serif',serif;font-style:italic;font-size:18.500px;line-height:22px;color:#f5202a;text-shadow:0 0 .5px #f5202a;letter-spacing:-.35px">Informe a senha da configuração 89.</div>
<div class="a" style="left:958px;top:536px;width:295px;height:59px;border:1.500px solid #1b1bff;background:#fff"></div>
<div class="f u" style="left:962px;top:540px;width:286px;height:51px"><span class="l" id="L16" style="left:4.1px;transform-origin:0 0;transform:scale(0.9877,1.045);top:-0.8px">Usuário</span></div>
<div class="f w" style="left:1257px;top:540px;width:285px;height:51px"><span class="l" id="L17" style="left:5.11px;transform-origin:0 0;transform:scale(0.9661,1.045);top:-0.8px">Senha</span></div>
<div class="btn" style="left:371px;width:287px"></div><div class="btn" style="left:666px;width:288px"></div><div class="btn" style="left:962px;width:288px"></div><div class="btn" style="left:1257px;width:288px"></div>
<div class="a bt" id="B1" style="left:429.15px;transform-origin:0 0;transform:scale(1.0485,1);top:623.300px">Lib. Á Vista/Cartão</div><div class="a bt" id="B1b" style="left:522.35px;transform-origin:0 0;transform:scale(1.0482,1);top:652.300px">F8</div><div class="a bt" id="B2" style="left:763.4px;transform-origin:0 0;transform:scale(1.0181,1);top:623.300px">Criar Alerta</div><div class="a bt" id="B2b" style="left:817.3px;transform-origin:0 0;transform:scale(1.1041,1);top:652.300px">F9</div><div class="a bt" id="B3" style="left:1060.4px;transform-origin:0 0;transform:scale(1.0389,1);top:637px">Confirmar</div><div class="a bt" id="B4" style="left:1379.4px;transform-origin:0 0;transform:scale(1.0387,1);top:637px">Voltar</div>
<svg class="a" style="left:372px;top:620px" width="60" height="60" viewBox="372 620 60 60"><defs><radialGradient id="mb" cx=".42" cy=".45" r=".65"><stop offset="0" stop-color="#f7c52c"/><stop offset=".6" stop-color="#e2a612"/><stop offset="1" stop-color="#a87806"/></radialGradient></defs><path d="M389 627.500c2-1.500 4.500-.5 6.500-1.200 2.500-.8 5 .6 7 1 2 .4 5.500-.5 6.500 1.500-2.500 2-5 5-5.500 8.500h-11c-.5-4-2-7.500-3.500-9.800z" fill="#c8930c"/><path d="M391.500 636.200h11l.8 4h-12.600z" fill="#f4d23a"/><path d="M391 640c-6 3.500-11.500 12-11.500 21 0 8 5 11 18.500 11s18.800-3 18.800-11c0-9-5.800-17.500-12.800-21z" fill="url(#mb)"/><text x="396.800" y="660.300" font-family="Liberation Sans, sans-serif" font-weight="bold" font-size="19" text-anchor="middle" fill="#3e2c06">$</text></svg>
<svg class="a" style="left:664px;top:620px" width="60" height="60" viewBox="664 620 60 60"><defs><linearGradient id="wy" x1="0" y1="0" x2="1" y2="1"><stop offset="0" stop-color="#ffec8c"/><stop offset=".55" stop-color="#fff03c"/><stop offset="1" stop-color="#ffff00"/></linearGradient></defs><path d="M692.200 631.300c1.100-1.900 3.500-1.900 4.600 0l19.800 34.500c1.100 1.900 0 3.700-2.200 3.700h-39.800c-2.200 0-3.300-1.800-2.200-3.700z" fill="url(#wy)" stroke="#9c8418" stroke-width="1.200"/><path d="M691.200 642.500c0-1.500 1.500-2.200 3.300-2.200s3.300.7 3.300 2.200l-1.500 13.500h-3.600z" fill="#2c2a10"/><ellipse cx="694.500" cy="661.700" rx="3" ry="2.400" fill="#2c2a10"/></svg>
<svg class="a" style="left:960px;top:620px" width="60" height="60" viewBox="960 620 60 60"><path d="M973.700 649.500l10.300 11.600 23.300-24" fill="none" stroke="#1f8f12" stroke-width="10.500" stroke-linecap="round" stroke-linejoin="round"/><path d="M973.700 649.500l10.300 11.600 23.300-24" fill="none" stroke="#36b41f" stroke-width="8.500" stroke-linecap="round" stroke-linejoin="round"/><path d="M974.500 647.500l9.500 10.500 22.500-22.500" fill="none" stroke="#5fd246" stroke-width="2.500" stroke-linecap="round" stroke-linejoin="round" opacity=".75"/></svg>
<svg class="a" style="left:1256px;top:620px" width="60" height="60" viewBox="1256 620 60 60"><defs><linearGradient id="ub" x1="0" y1="1" x2="1" y2="0"><stop offset="0" stop-color="#8cc8ff"/><stop offset=".5" stop-color="#5aaaf8"/><stop offset="1" stop-color="#1478e6"/></linearGradient></defs><path d="M1263.200 642.900L1272.400 649.500C1278 639 1286 632 1294.400 632.300C1302 632.500 1307.500 640 1307.400 649.500C1307.300 655 1306 659 1304.600 661.800C1304.500 655 1303.500 650 1301.200 647.400C1299 644 1297 642 1295.700 641.900C1291 641.800 1285 646 1281.300 653.600L1291.600 657L1268.300 665.900Z" fill="url(#ub)" stroke="#2a86e0" stroke-width="1.300" stroke-linejoin="round"/></svg>

</div>

<div id="lw" class="a"></div>
<div class="a" style="left:217px;top:701px;width:1503px;height:38px;background:#fff;border-right:1px solid #3a3a3a"></div>
<svg class="a" style="left:224px;top:708px" width="22" height="22" viewBox="0 0 22 22"><rect width="22" height="22" fill="#fff"/><path d="M21.500 1v20.500H1" fill="none" stroke="#e2e2e6"/><g fill="#f8701c" transform="translate(4.200 3) scale(.156 .25)"><path d="M0 0h23.400L0 15.600z"/><path d="M80 0H55.500L80 15.600z"/><path d="M39.900 2.600L80 27.800v14.700L27.800 9.500z"/><path d="M18.200 16.500l13 7.800L0 42.500V27.800z"/><path d="M39.900 29.500l13 8.700V60h-26V38.200z"/><path d="M0 55.500l15.600-8.600V60H0z"/><path d="M80 55.500l-15.800-8.600V60H80z"/></g></svg><div class="a" style="left:251px;top:710.500px;font-size:17.300px;line-height:22px;color:#000">Lançamentos</div>
<svg class="a" style="left:1685px;top:711px" width="18" height="18" viewBox="0 0 18 18"><path d="M1.500 1.500l15 15M16.500 1.500l-15 15" stroke="#000" stroke-width="1.200" fill="none"/></svg>
<div class="a" style="left:219px;top:745px;width:1489px;height:131px;background:#fff;border:1px solid #a0a0a0;border-bottom:0"></div>
<div class="a" style="left:352px;top:775px;width:1327px;height:35px;background:#b4d7fb"></div>
<div class="a" style="left:220px;top:811px;width:1459px;height:35px;background:#f2f3f9"></div>
<div class="a" style="left:220px;top:810px;width:1459px;height:1px;background:#e4e4e4"></div>
<div class="a" style="left:220px;top:846px;width:1459px;height:1px;background:#e0e0e0"></div>
<div class="vl" style="left:352px"></div><div class="vl" style="left:442px"></div><div class="vl" style="left:532px"></div><div class="vl" style="left:622px"></div><div class="vl" style="left:661px"></div><div class="vl" style="left:718px"></div><div class="vl" style="left:832px"></div><div class="vl" style="left:892px"></div><div class="vl" style="left:1027px"></div><div class="vl" style="left:1162px"></div><div class="vl" style="left:1205px"></div><div class="vl" style="left:1248px"></div>
<div class="a" style="left:221px;top:775px;width:131px;height:34px;background:#e5f1fb;border:1px solid #c0dcf5;border-top:0"></div>
<div class="a" style="left:259.500px;top:775.500px;width:1.200px;height:18.500px;background:#000"></div>



<div class="gh" id="G0" style="left:242.0px;transform-origin:0 0;transform:scaleX(0.9978)">Lançamento</div><div class="gh" id="G1" style="left:377.52px;transform-origin:0 0;transform:scaleX(1.0661)">Venc.</div><div class="gh" id="G2" style="left:457.78px;transform-origin:0 0;transform:scaleX(0.9268)">Emissão</div><div class="gh" id="G3" style="left:560.02px;transform-origin:0 0;transform:scaleX(0.9759)">Data</div><div class="gh" id="G4" style="left:625.76px;transform-origin:0 0;transform:scaleX(1.0722)">U.N.</div><div class="gh" id="G5" style="left:672.71px;transform-origin:0 0;transform:scaleX(0.9138)">Série</div><div class="gh" id="G6" style="left:765.73px;transform-origin:0 0;transform:scaleX(0.9701)">NF</div><div class="gh" id="G7" style="left:839.11px;transform-origin:0 0;transform:scaleX(0.972)">Compl.</div><div class="gh" id="G8" style="left:897.0px;transform-origin:0 0;transform:scaleX(0.9506)">Valor</div><div class="gh" id="G9" style="left:1031.93px;transform-origin:0 0;transform:scaleX(0.9502)">Saldo</div><div class="gh" id="G10" style="left:1166.02px;transform-origin:0 0;transform:scaleX(0.9875)">Port.</div><div class="gh" id="G11" style="left:1207.86px;transform-origin:0 0;transform:scaleX(1.0457)">Prev.</div><div class="gh" id="G12" style="left:1251.21px;transform-origin:0 0;transform:scaleX(0.9636)">Cliente</div>
<div class="gs r1" id="P0" style="left:261.3px;transform-origin:0 0;transform:scaleX(0.9623);top:775.5px">203139</div><div class="gc r1" id="P1" style="left:364.61px;transform-origin:0 0;transform:scaleX(0.9827);top:781px">01/06/15</div><div class="gc r1" id="P2" style="left:453.7px;transform-origin:0 0;transform:scaleX(0.9801);top:781px">01/06/15</div><div class="gc r1" id="P3" style="left:544.0px;transform-origin:0 0;transform:scaleX(0.9945);top:781px">03/08/23</div><div class="gc r1" id="P4" style="left:639px;transform-origin:0 0;transform:scaleX(1);top:781px">1</div><div class="gs r1" id="P5" style="left:771.3px;transform-origin:0 0;transform:scaleX(1);top:782px">0</div><div class="gs r1" id="P6" style="left:984.59px;transform-origin:0 0;transform:scaleX(1.0155);top:782px">15,00</div><div class="gs r1" id="P7" style="left:1119.19px;transform-origin:0 0;transform:scaleX(1.0155);top:782px">15,00</div><div class="gs r1" id="P8" style="left:1251.18px;transform-origin:0 0;transform:scaleX(1.0308);top:782px">001210</div><div class="gs r1" id="P9" style="left:1326.53px;transform-origin:0 0;transform:scaleX(0.9322);top:782px">CÔNJUGE CLIENTE PF 2</div>
<div class="gs r2" id="Q0" style="left:259.79px;transform-origin:0 0;transform:scaleX(1.0004);top:817.5px">108848</div><div class="gc r2" id="Q1" style="left:364.6px;transform-origin:0 0;transform:scaleX(0.9828);top:817px">01/06/16</div><div class="gc r2" id="Q2" style="left:453.7px;transform-origin:0 0;transform:scaleX(0.9942);top:817px">01/06/16</div><div class="gc r2" id="Q3" style="left:544.0px;transform-origin:0 0;transform:scaleX(0.9942);top:817px">01/06/16</div><div class="gc r2" id="Q4" style="left:639px;transform-origin:0 0;transform:scaleX(1);top:817px">1</div><div class="gs r2" id="Q5" style="left:771.3px;transform-origin:0 0;transform:scaleX(1);top:818px">0</div><div class="gs r2" id="Q6" style="left:984.57px;transform-origin:0 0;transform:scaleX(1.0422);top:818px">15,00</div><div class="gs r2" id="Q7" style="left:1119.16px;transform-origin:0 0;transform:scaleX(1.0422);top:818px">15,00</div><div class="gs r2" id="Q8" style="left:1165.91px;transform-origin:0 0;transform:scaleX(0.9534);top:818px">G01</div><div class="gs r2" id="Q9" style="left:1251.18px;transform-origin:0 0;transform:scaleX(1.0308);top:818px">001210</div><div class="gs r2" id="Q10" style="left:1326.53px;transform-origin:0 0;transform:scaleX(0.9322);top:818px">CÔNJUGE CLIENTE PF 2</div>
<div class="a" style="left:1212px;top:783px;width:17px;height:16px;border:1.700px solid #e81c24;background:#dcebfb"></div>
<div class="a" style="left:1212px;top:819px;width:17px;height:16px;border:1.700px solid #e81c24;background:#f2f3f9"></div>
<div class="a" style="left:1682px;top:747px;width:25px;height:129px;background:#f0f0f0"></div>
<svg class="a" style="left:1687px;top:757px" width="13" height="9" viewBox="0 0 13 9"><path d="M1.500 7.500l5-5 5 5" fill="none" stroke="#555" stroke-width="2.600"/></svg>

</div>
</body></html>
